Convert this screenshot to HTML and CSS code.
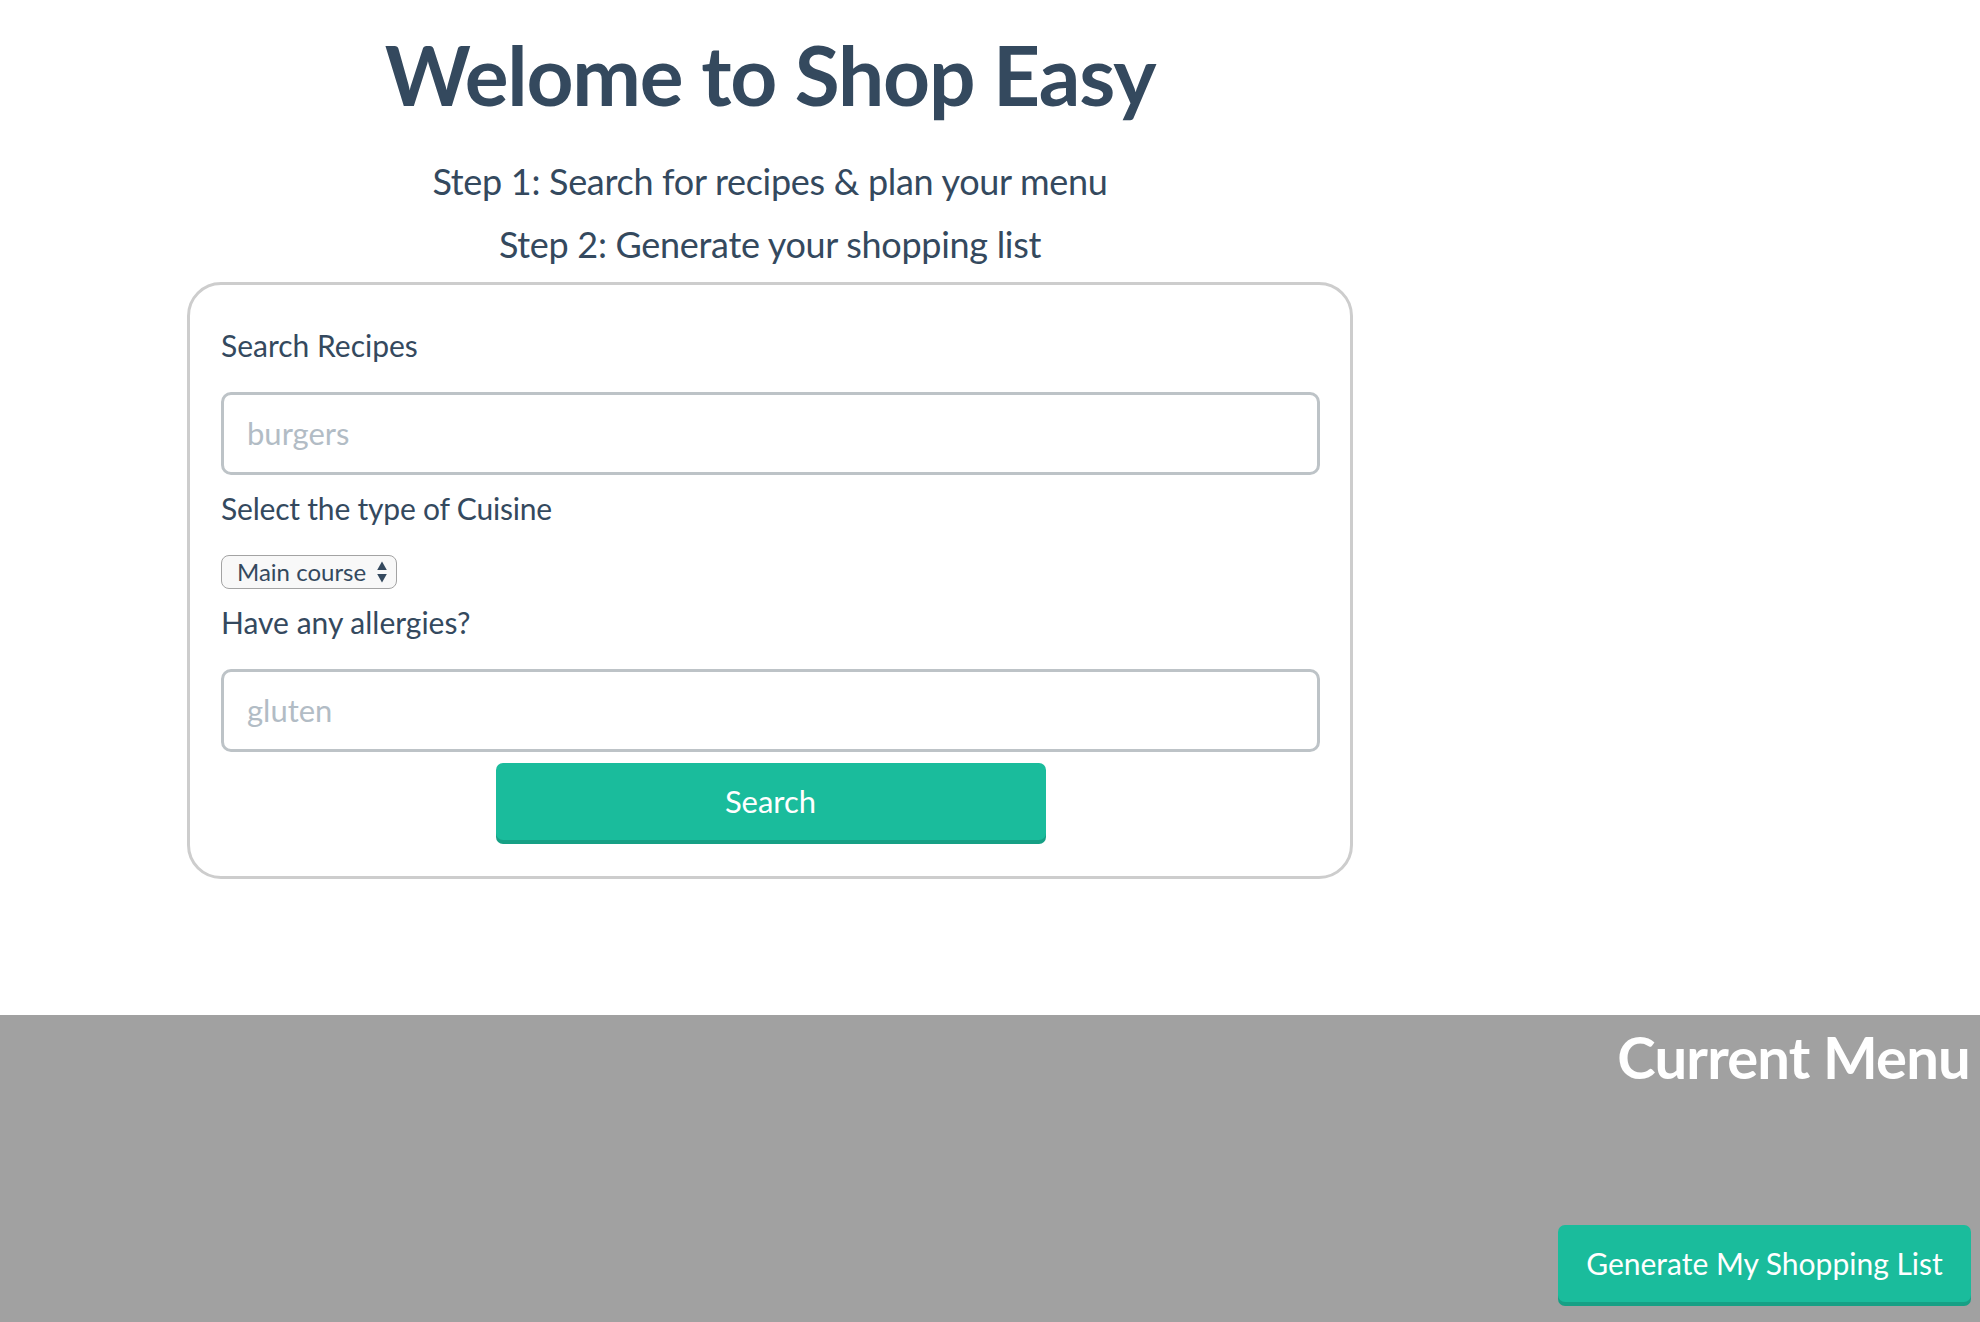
FILE: index.html
```html
<!DOCTYPE html>
<html lang="en">
<head>
<meta charset="utf-8">
<title>Shop Easy</title>
<link rel="stylesheet" href="styles.css">
</head>
<body>
<main class="planner">
  <h1 class="title">Welome to Shop Easy</h1>
  <p class="step">Step 1: Search for recipes &amp; plan your menu</p>
  <p class="step">Step 2: Generate your shopping list</p>
  <form class="card">
    <label class="field-label" for="recipe">Search Recipes</label>
    <input class="text-input" id="recipe" type="text" placeholder="burgers">
    <label class="field-label narrow" for="cuisine">Select the type of Cuisine</label>
    <div class="select-wrap">
      <select class="select" id="cuisine">
        <option>Main course</option>
        <option>Side dish</option>
        <option>Dessert</option>
      </select>
      <svg class="select-arrows" width="10" height="22" viewBox="0 0 10 22" aria-hidden="true">
        <path d="M5 0.5 L9.8 9 L0.2 9 Z" fill="#34495e"/>
        <path d="M5 21.5 L9.8 13 L0.2 13 Z" fill="#34495e"/>
      </svg>
    </div>
    <label class="field-label" for="allergies">Have any allergies?</label>
    <input class="text-input" id="allergies" type="text" placeholder="gluten">
    <button class="btn btn-search" type="button">Search</button>
  </form>
</main>
<section class="menu">
  <h2 class="menu-title">Current Menu</h2>
  <ul class="menu-list"></ul>
  <button class="btn btn-generate" type="button">Generate My Shopping List</button>
</section>
</body>
</html>
```
FILE: styles.css
```css
* { box-sizing: border-box; }

html, body {
  margin: 0;
  padding: 0;
  background: #ffffff;
}

body {
  font-family: Lato, "Open Sans", "Liberation Sans", sans-serif;
  color: #34495e;
}

.planner {
  width: 1540px;
  display: flex;
  flex-direction: column;
  align-items: center;
  padding-top: 25px;
}

.title {
  margin: 0;
  font-size: 82px;
  font-weight: 700;
  line-height: 1.2;
  letter-spacing: -1.2px;
  text-align: center;
}

.step {
  margin: 0;
  font-size: 36px;
  line-height: 63px;
  letter-spacing: -0.3px;
  text-align: center;
}

.step:first-of-type {
  margin-top: 26.5px;
}

.card {
  align-self: stretch;
  margin: 6px 187px 136px;
  border: 3px solid #cdcdcd;
  border-radius: 34px;
  padding: 42px 30px 36px 31px;
  display: flex;
  flex-direction: column;
}

.field-label {
  font-size: 30px;
  line-height: 36px;
  margin-bottom: 29px;
}

.field-label.narrow {
  letter-spacing: -0.2px;
}

.text-input {
  height: 83px;
  border: 3px solid #bdc3c7;
  border-radius: 10px;
  padding: 0 23px;
  font-family: inherit;
  font-size: 31px;
  color: #34495e;
  margin-bottom: 15px;
  outline: none;
}

.text-input::placeholder {
  color: #b2bcc5;
}

.select-wrap {
  position: relative;
  align-self: flex-start;
  margin-bottom: 15px;
}

.select {
  appearance: none;
  -webkit-appearance: none;
  width: 176px;
  height: 34px;
  border: 1.5px solid #a3a3a3;
  border-radius: 8px;
  background: #f8f8f8;
  padding: 0 0 0 15px;
  font-family: inherit;
  font-size: 24px;
  color: #34495e;
  outline: none;
}

.select-arrows {
  position: absolute;
  right: 10px;
  top: 6px;
  pointer-events: none;
}

.btn {
  border: none;
  border-radius: 7px;
  background: #1abc9c;
  box-shadow: 0 4px 0 #16a085;
  color: #ffffff;
  font-family: inherit;
  height: 77px;
  cursor: pointer;
}

.btn-search {
  align-self: center;
  width: 550px;
  margin-top: -4px;
  font-size: 31px;
}

.menu {
  background: #a1a1a1;
  min-height: 308px;
  padding: 6px 9px 17px 0;
  display: flex;
  flex-direction: column;
  align-items: flex-end;
}

.menu-title {
  margin: 0 1px 0 0;
  font-size: 58px;
  font-weight: 700;
  line-height: 72px;
  letter-spacing: -0.8px;
  color: #ffffff;
}

.menu-list {
  list-style: none;
  margin: 0;
  padding: 0;
  min-height: 132px;
}

.btn-generate {
  font-size: 30px;
  padding: 0 20px;
  width: 413px;
}
```
